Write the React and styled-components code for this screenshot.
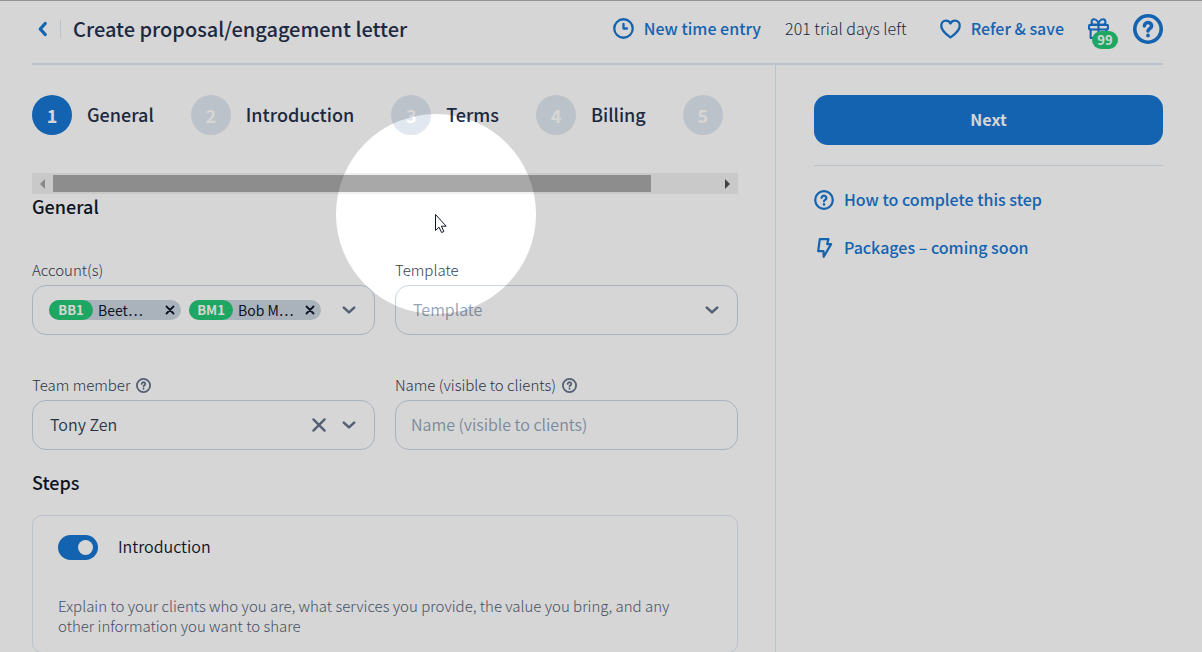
import { useState } from "react";
import styled, { createGlobalStyle } from "styled-components";

const GlobalStyle = createGlobalStyle`
  * {
    box-sizing: border-box;
  }
  body {
    margin: 0;
    background: #fff;
    color: #24304d;
    font-family: "Source Sans Pro", "Noto Sans CJK SC", "Noto Sans", sans-serif;
    font-size: 16px;
    font-weight: 350;
    line-height: 24px;
  }
  button, input, select {
    font: inherit;
    color: inherit;
    margin: 0;
    padding: 0;
    border: 0;
    background: none;
  }
  button {
    cursor: pointer;
  }
`

const Page = styled.div`
  display: flex;
  flex-direction: column;
  min-height: 100vh;
  padding: 0 39px 0 32px;
  border-top: 1px solid #aeaeae;
`

const Header = styled.header`
  display: flex;
  align-items: center;
  justify-content: space-between;
  height: 64px;
  padding-bottom: 7px;
  border-bottom: 2px solid #e1e8f0;
  font-weight: 300;
`

const HeaderGroup = styled.div`
  display: flex;
  align-items: center;
  gap: ${(props) => props.$gap};
`

const IconButton = styled.button`
  display: flex;
  align-items: center;
  justify-content: center;
  color: ${(props) => props.$color || "#1976d2"};
`

const Title = styled.h1`
  margin: 0;
  padding-left: 12px;
  font-size: 20px;
  font-weight: 500;
`

const Divider = styled.span`
  width: 1px;
  height: 18px;
  margin-left: 6px;
  background: #e1e8f0;
`

/* the font sits low in its line box, so labels beside icons are lifted */
const Label = styled.span`
  padding-bottom: 2px;
`

const ActionLink = styled.a`
  display: flex;
  align-items: center;
  gap: 10px;
  color: #1976d2;
  font-weight: 500;
  text-decoration: none;
`

const GiftButton = styled(IconButton)`
  position: relative;
`

const Badge = styled.span`
  position: absolute;
  left: 4px;
  top: 13px;
  width: 26px;
  height: 18px;
  border-radius: 9px;
  background: #24c875;
  color: #fff;
  font-size: 13px;
  font-weight: 700;
  line-height: 18px;
`

const Body = styled.div`
  display: grid;
  grid-template-columns: minmax(0, 1fr) 388px;
  flex: 1;
`

const Main = styled.main`
  padding: 30px 37px 0 0;
`

const Side = styled.aside`
  padding: 30px 0 0 38px;
  border-left: 1px solid #e1e8f0;
`

const StepList = styled.ol`
  display: flex;
  gap: 37px;
  margin: 0 0 38px;
  padding: 0;
  overflow: hidden;
  list-style: none;
`

const StepItem = styled.li`
  display: flex;
  flex-shrink: 0;
  align-items: center;
  gap: 15px;
  font-size: 18px;
  font-weight: 500;
`

const StepNumber = styled.span`
  width: 40px;
  height: 40px;
  border-radius: 50%;
  background: ${(props) => (props.$active ? "#1976d2" : "#e1e8f0")};
  color: #fff;
  font-size: 18px;
  font-weight: 700;
  line-height: 40px;
  text-align: center;
`

const ScrollTrack = styled.div`
  display: flex;
  align-items: center;
  height: 21px;
  background: #f0f0f0;
`

const ScrollArrow = styled(IconButton)`
  width: 21px;
  height: 21px;
`

const ScrollRail = styled.div`
  flex: 1;
`

const ScrollThumb = styled.div`
  width: 90%;
  height: 17px;
  background: #a8a8a8;
`

const Heading = styled.h2`
  margin: 0;
  color: #0f172a;
  font-size: 18px;
  font-weight: 500;
  line-height: 24px;
`

const FieldGrid = styled.div`
  display: grid;
  grid-template-columns: 1fr 1fr;
  gap: 39px 20px;
  margin: 41px 0 20px;
`

const Field = styled.div`
  display: flex;
  flex-direction: column;
  gap: 4px;
`

const FieldLabel = styled.div`
  display: flex;
  align-items: center;
  gap: 6px;
  height: 22px;
  color: #334155;
  font-size: 15px;
  font-weight: 300;
  svg {
    color: #64748b;
  }
`

const Control = styled.div`
  display: grid;
  grid-template-columns: 1fr auto;
  align-items: center;
  height: 50px;
  border: 1px solid #cbd5e1;
  border-radius: 14px;
`

const Select = styled.select`
  grid-area: 1 / 1 / 2 / -1;
  width: 100%;
  height: 48px;
  padding: 0 0 2px 17px;
  appearance: none;
  color: ${(props) => (props.value ? "#334155" : "#94a3b8")};
`

const TextInput = styled.input`
  height: 50px;
  padding: 0 15px 2px;
  border: 1px solid #cbd5e1;
  border-radius: 14px;
  &::placeholder {
    color: #94a3b8;
    opacity: 1;
  }
`

const ControlIcons = styled.div`
  grid-area: 1 / 2;
  display: flex;
  align-items: center;
  gap: 14px;
  padding-right: 17px;
  color: #64748b;
  pointer-events: none;
  button {
    pointer-events: auto;
  }
`

const Chips = styled.div`
  grid-area: 1 / 1;
  display: flex;
  gap: 8px;
  padding-left: 16px;
`

const Chip = styled.span`
  display: flex;
  flex-shrink: 0;
  align-items: center;
  height: 20px;
  padding-right: 6px;
  border-radius: 10px;
  background: #cbd5e1;
  color: #0f172a;
  font-size: 14px;
  font-weight: 400;
  line-height: 20px;
`

const ChipCode = styled.b`
  min-width: 44px;
  padding: 0 8px;
  border-radius: 10px;
  background: #24c875;
  color: #fff;
  font-weight: 700;
  font-size: 13px;
  text-align: center;
`

const ChipName = styled.span`
  width: 72px;
  padding-left: 5px;
  white-space: nowrap;
`

const Card = styled.section`
  margin-top: 21px;
  padding: 18px 25px 16px;
  border: 1px solid #e1e8f0;
  border-radius: 10px;
`

const ToggleLabel = styled.label`
  display: flex;
  align-items: center;
  gap: 20px;
  color: #0f172a;
  font-size: 16px;
`

const Toggle = styled.input`
  display: flex;
  align-items: center;
  justify-content: ${(props) => (props.checked ? "flex-end" : "flex-start")};
  width: 40px;
  height: 25px;
  padding: 0 5px;
  border-radius: 13px;
  background: ${(props) => (props.checked ? "#1976d2" : "#cbd5e1")};
  appearance: none;
  &::before {
    content: "";
    width: 15px;
    height: 15px;
    border-radius: 50%;
    background: #fff;
  }
`

const Description = styled.p`
  margin: 36px 0 0;
  padding-right: 24px;
  color: #536179;
  font-size: 15px;
  font-weight: 300;
  line-height: 20px;
`

const NextButton = styled.button`
  width: 100%;
  height: 50px;
  padding-bottom: 2px;
  border-radius: 14px;
  background: #1976d2;
  color: #fff;
  font-weight: 700;
`

const SideLinks = styled.nav`
  display: flex;
  flex-direction: column;
  gap: 22px;
  margin-top: 20px;
  padding-top: 21px;
  border-top: 1px solid #e1e8f0;
`

/* dims everything except a disc around the pointer */
const Spotlight = styled.div`
  position: fixed;
  left: 336px;
  top: 114px;
  width: 200px;
  height: 200px;
  border-radius: 50%;
  box-shadow: 0 0 0 200vmax rgba(0, 0, 0, 0.16);
  pointer-events: none;
`

const Pointer = styled.svg`
  position: absolute;
  left: 98px;
  top: 99px;
`

function Icon({ size = 20, stroke = 2, children }) {
  return (
    <svg
      width={size}
      height={size}
      viewBox="0 0 20 20"
      fill="none"
      stroke="currentColor"
      strokeWidth={stroke}
      strokeLinecap="round"
      strokeLinejoin="round"
      aria-hidden="true"
    >
      {children}
    </svg>
  );
}

function HelpIcon({ size, stroke = 2.2 }) {
  return (
    <Icon size={size} stroke={stroke}>
      <circle cx="10" cy="10" r="8.8" />
      <path d="M7.6 7.9a2.4 2.2 0 1 1 3.7 1.8c-.9.6-1.3.9-1.3 1.6" />
      <path d="M10 14.3v.1" strokeWidth="2.5" />
    </Icon>
  );
}

function ClockIcon() {
  return (
    <Icon size={21} stroke={2.2}>
      <circle cx="10" cy="10" r="8.8" />
      <path d="M10 5.6V10h3.3" />
    </Icon>
  );
}

function HeartIcon() {
  return (
    <Icon size={21} stroke={2.2}>
      <path d="M10 18.5C8.5 17.3 1.2 12.5 1.2 7.3 1.2 4.5 3.2 2.5 5.6 2.5 7.6 2.5 9.2 3.5 10 5.2 10.8 3.5 12.4 2.5 14.4 2.5c2.4 0 4.4 2 4.4 4.8C18.8 12.5 11.5 17.3 10 18.5Z" />
    </Icon>
  );
}

function GiftIcon() {
  return (
    <Icon size={21} stroke={2}>
      <rect x="1" y="6.5" width="18" height="4.5" rx="1" />
      <path d="M2.5 11v8h15v-8M10 6.5V19" />
      <path d="M10 6.5H5.5C2.8 6.5 2.6 1.2 5.5 1.2 8 1.2 10 3.5 10 6.5ZM10 6.5h4.5c2.7 0 2.9-5.3 0-5.3C12 1.2 10 3.5 10 6.5Z" />
    </Icon>
  );
}

function BoltIcon() {
  return (
    <Icon stroke={2.2}>
      <path d="M5.8 1.2h8.6l-1.2 4.9h3.9L9.7 18.8l-.2-5.6H4.2L5.8 1.2Z" />
    </Icon>
  );
}

function ChevronDown() {
  return (
    <Icon size={16} stroke={3.2}>
      <path d="M3.5 7 10 13l6.5-6" />
    </Icon>
  );
}

function CloseIcon({ size = 16, stroke = 3 }) {
  return (
    <Icon size={size} stroke={stroke}>
      <path d="M3 3l14 14M17 3L3 17" />
    </Icon>
  );
}

const steps = ["General", "Introduction", "Terms", "Billing", "Payments"];

const accounts = [
  { code: "BB1", name: "Beet…" },
  { code: "BM1", name: "Bob M…" },
];

function TopBar() {
  return (
    <Header>
      <HeaderGroup $gap="0">
        <IconButton aria-label="Back">
          <Icon size={22} stroke={3}>
            <path d="M12 5 7.5 10l4.5 5" />
          </Icon>
        </IconButton>
        <Divider />
        <Title>Create proposal/engagement letter</Title>
      </HeaderGroup>
      <HeaderGroup $gap="33px">
        <HeaderGroup $gap="24px">
          <ActionLink href="#time"><ClockIcon /> <Label>New time entry</Label></ActionLink>
          <Label>201 trial days left</Label>
        </HeaderGroup>
        <HeaderGroup $gap="24px">
          <ActionLink href="#refer"><HeartIcon /> <Label>Refer &amp; save</Label></ActionLink>
          <GiftButton aria-label="Rewards">
            <GiftIcon />
            <Badge>99</Badge>
          </GiftButton>
          <IconButton aria-label="Help"><HelpIcon size={30} stroke={2.4} /></IconButton>
        </HeaderGroup>
      </HeaderGroup>
    </Header>
  );
}

function Stepper() {
  return (
    <>
      <StepList>
        {steps.map((name, i) => (
          <StepItem key={name}>
            <StepNumber $active={i === 0}>{i + 1}</StepNumber>
            {i < 4 && <Label>{name}</Label>}
          </StepItem>
        ))}
      </StepList>
      <ScrollTrack>
        <ScrollArrow aria-label="Scroll left" $color="#a3a3a3">
          <svg width="5" height="10"><path d="M5 0v10L0 5Z" fill="currentColor" /></svg>
        </ScrollArrow>
        <ScrollRail><ScrollThumb /></ScrollRail>
        <ScrollArrow aria-label="Scroll right" $color="#505050">
          <svg width="5" height="10"><path d="M0 0v10l5-5Z" fill="currentColor" /></svg>
        </ScrollArrow>
      </ScrollTrack>
    </>
  );
}

function Fields() {
  const [template, setTemplate] = useState("");
  const [member, setMember] = useState("Tony Zen");

  return (
    <FieldGrid>
      <Field role="group" aria-labelledby="accounts">
        <FieldLabel id="accounts">Account(s)</FieldLabel>
        <Control>
          <Chips>
            {accounts.map((account) => (
              <Chip key={account.code}>
                <ChipCode>{account.code}</ChipCode>
                <ChipName>{account.name}</ChipName>
                <IconButton aria-label={"Remove " + account.code} $color="#0f172a">
                  <CloseIcon size={10} stroke={3.6} />
                </IconButton>
              </Chip>
            ))}
          </Chips>
          <ControlIcons>
            <IconButton aria-label="Show accounts" $color="#64748b"><ChevronDown /></IconButton>
          </ControlIcons>
        </Control>
      </Field>
      <Field>
        <FieldLabel as="label" htmlFor="template">Template</FieldLabel>
        <Control>
          <Select id="template" value={template} onChange={(e) => setTemplate(e.target.value)}>
            <option value="">Template</option>
          </Select>
          <ControlIcons><ChevronDown /></ControlIcons>
        </Control>
      </Field>
      <Field>
        <FieldLabel as="label" htmlFor="member">Team member <HelpIcon size={15} stroke={2.4} /></FieldLabel>
        <Control>
          <Select id="member" value={member} onChange={(e) => setMember(e.target.value)}>
            <option value=""></option>
            <option>Tony Zen</option>
          </Select>
          <ControlIcons>
            <IconButton aria-label="Clear team member" $color="#64748b" onClick={() => setMember("")}>
              <CloseIcon />
            </IconButton>
            <ChevronDown />
          </ControlIcons>
        </Control>
      </Field>
      <Field>
        <FieldLabel as="label" htmlFor="name">Name (visible to clients) <HelpIcon size={15} stroke={2.4} /></FieldLabel>
        <TextInput id="name" placeholder="Name (visible to clients)" />
      </Field>
    </FieldGrid>
  );
}

function StepCard() {
  const [checked, setChecked] = useState(true);

  return (
    <Card>
      <ToggleLabel>
        <Toggle type="checkbox" checked={checked} onChange={() => setChecked(!checked)} />
        <Label>Introduction</Label>
      </ToggleLabel>
      <Description>
        Explain to your clients who you are, what services you provide, the value you bring, and any
        other information you want to share
      </Description>
    </Card>
  );
}

function App() {
  return (
    <>
      <GlobalStyle />
      <Page>
        <TopBar />
        <Body>
          <Main>
            <Stepper />
            <Heading>General</Heading>
            <Fields />
            <Heading>Steps</Heading>
            <StepCard />
          </Main>
          <Side>
            <NextButton>Next</NextButton>
            <SideLinks>
              <ActionLink href="#help"><HelpIcon /> <Label>How to complete this step</Label></ActionLink>
              <ActionLink href="#packages"><BoltIcon /> <Label>Packages – coming soon</Label></ActionLink>
            </SideLinks>
          </Side>
        </Body>
      </Page>
      <Spotlight>
        <Pointer width="14" height="21" viewBox="0 0 14 21">
          <path d="M1.5 1.5v16l3.5-3.3 2.6 5.3 2.3-1-2.5-5.3h4.8Z" fill="#fff" stroke="#111827" />
        </Pointer>
      </Spotlight>
    </>
  );
}

export default App;
